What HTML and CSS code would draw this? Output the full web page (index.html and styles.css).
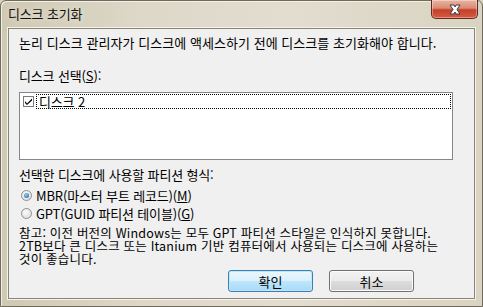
FILE: index.html
```html
<!DOCTYPE html>
<html lang="ko">
<head>
<meta charset="utf-8">
<link rel="stylesheet" href="styles.css">
</head>
<body>
<div class="window">
  <div class="titlebar">
    <span class="title">디스크 초기화</span>
    <div class="close">
      <svg width="18" height="11" viewBox="0 0 18 11">
        <path d="M4 1 L8 1 L9 3 L10 1 L14 1 L11 5.5 L14 10 L10 10 L9 8 L8 10 L4 10 L7 5.5 Z" fill="#fff" stroke="#3b3b4a" stroke-width="1" stroke-linejoin="round"/>
      </svg>
    </div>
  </div>
  <div class="client">
    <p class="intro">논리 디스크 관리자가 디스크에 액세스하기 전에 디스크를 초기화해야 합니다.</p>
    <p class="label">디스크 선택(<u>S</u>):</p>
    <div class="listbox">
      <div class="item">
        <span class="check">
          <svg width="9" height="9" viewBox="0 0 9 9"><path d="M1 4 L3 6.5 L8 1.5 L8 3.5 L3 8 L1 6 Z" fill="#000"/></svg>
        </span>
        <span class="item-text">디스크 2</span>
      </div>
    </div>
    <p class="label2">선택한 디스크에 사용할 파티션 형식:</p>
    <div class="radio-row first"><span class="radio checked"></span><span>MBR(마스터 부트 레코드)(<u>M</u>)</span></div>
    <div class="radio-row"><span class="radio"></span><span>GPT(GUID 파티션 테이블)(<u>G</u>)</span></div>
    <p class="note">참고: 이전 버전의 Windows는 모두 GPT 파티션 스타일은 인식하지 못합니다.<br>2TB보다 큰 디스크 또는 Itanium 기반 컴퓨터에서 사용되는 디스크에 사용하는<br>것이 좋습니다.</p>
    <div class="buttons">
      <button class="btn default">확인</button>
      <button class="btn">취소</button>
    </div>
  </div>
</div>
</body>
</html>
```
FILE: styles.css
```css
html, body {
  margin: 0;
  padding: 0;
  background: #d8d2c0;
}
body {
  font-family: "Noto Sans CJK KR", "Noto Sans", sans-serif;
  font-size: 13px;
  letter-spacing: -0.15px;
  color: #000;
}
.window {
  width: 483px;
  height: 307px;
  box-sizing: border-box;
  border: 1px solid #6e6a5c;
  border-radius: 6px 6px 0 0;
  background: linear-gradient(to right, #cfc8b2 0%, #ddd8c8 30%, #e2ddcf 60%, #d9d3c1 100%);
  display: flex;
  flex-direction: column;
  box-shadow: inset 1px 1px 0 #f2efe6;
}
.titlebar {
  height: 27px;
  display: flex;
  align-items: flex-start;
  justify-content: space-between;
}
.title {
  margin: 5px 0 0 7px;
  line-height: 16px;
  font-size: 13px;
  color: #111;
  text-shadow: 0 0 6px #f4f1e8;
}
.close {
  width: 47px;
  height: 19px;
  margin-right: 4px;
  margin-top: -1px;
  box-sizing: border-box;
  border: 1px solid #5e2a22;
  border-top: none;
  border-radius: 0 0 5px 5px;
  background: linear-gradient(to bottom, #e9b4a3 0%, #d98b73 45%, #c4402a 55%, #d85a3f 100%);
  display: flex;
  align-items: center;
  justify-content: center;
  box-shadow: inset 0 0 0 1px rgba(255,255,255,0.35);
}
.client {
  flex: 1;
  margin: 0 7px 7px 7px;
  border: 1px solid #8a8676;
  background: #f0f0f0;
  padding: 0 10px;
  display: flex;
  flex-direction: column;
  box-shadow: 0 0 0 1px #f4f2ea;
}
p { margin: 0; }
.intro {
  margin-top: 6px;
  line-height: 15px;
  letter-spacing: 0.05px;
}
.label {
  margin-top: 18px;
  line-height: 15px;
}
u { text-decoration: underline; text-underline-offset: 1px; }
.listbox {
  margin-top: 9px;
  height: 68px;
  width: 434px;
  box-sizing: border-box;
  border: 1px solid #828790;
  background: #fff;
  padding: 1px;
}
.item {
  display: flex;
  align-items: center;
  height: 15px;
}
.check {
  width: 11px;
  height: 11px;
  box-sizing: border-box;
  border: 1px solid #7a7a7a;
  background: #fff;
  margin: 0 2px 0 2px;
  display: flex;
  align-items: center;
  justify-content: center;
}
.item-text {
  flex: 1;
  height: 15px;
  line-height: 13px;
  box-sizing: border-box;
  border: 1px dotted #000;
  padding-left: 2px;
}
.label2 {
  margin-top: 7px;
  line-height: 15px;
}
.radio-row {
  display: flex;
  align-items: center;
  height: 18px;
}
.radio-row.first { margin-top: 4px; }
.radio {
  width: 11px;
  height: 11px;
  box-sizing: border-box;
  border: 1px solid #8e8f8f;
  border-radius: 50%;
  background: radial-gradient(circle at 40% 35%, #fafafa, #d8d8d8);
  margin: 0 4px 0 2px;
  position: relative;
}
.radio.checked::after {
  content: "";
  position: absolute;
  left: 2px;
  top: 2px;
  width: 5px;
  height: 5px;
  border-radius: 50%;
  background: radial-gradient(circle at 40% 35%, #8bd0f7, #1d5a9c);
}
.note {
  margin-top: 4px;
  font-size: 12.5px;
  letter-spacing: 0.2px;
  line-height: 13px;
}
.buttons {
  display: flex;
  justify-content: flex-end;
  gap: 16px;
  margin-top: 5px;
  padding-right: 50px;
}
.btn {
  width: 85px;
  height: 22px;
  font-family: inherit;
  font-size: 13px;
  border: 1px solid #707070;
  border-radius: 3px;
  background: linear-gradient(to bottom, #f2f2f2 0%, #ebebeb 48%, #dddddd 52%, #cfcfcf 100%);
  box-shadow: inset 0 0 0 1px #fcfcfc;
  padding: 0;
  color: #000;
}
.btn.default {
  border-color: #3c7fb1;
  background: linear-gradient(to bottom, #eaf6fd 0%, #d9f0fc 48%, #bee6fd 52%, #a7d9f5 100%);
  box-shadow: inset 0 0 0 1px #bfe6fb;
}
```
